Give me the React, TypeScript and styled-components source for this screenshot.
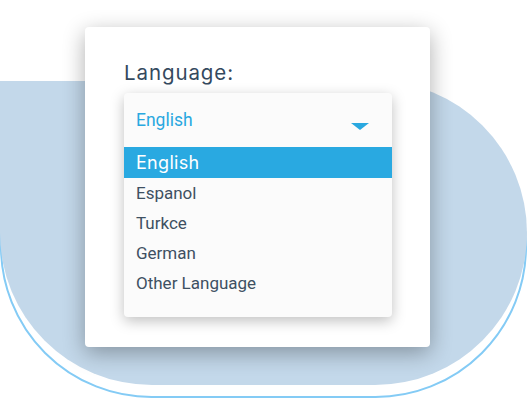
import React from 'react';
import styled, { createGlobalStyle } from 'styled-components';

const options = ['English', 'Espanol', 'Turkce', 'German', 'Other Language'];

const App: React.FC = () => {
  const selected = 'English';

  return (
    <>
      <GlobalStyle />
      <Page>
        <Outline />
        <Blob />
        <Card>
          <Label>Language:</Label>
          <Dropdown>
            <SelectBox>
              <Current>{selected}</Current>
              <Caret />
            </SelectBox>
            <OptionList>
              {options.map((o) => (
                <Option key={o} $active={o === selected}>
                  {o}
                </Option>
              ))}
            </OptionList>
          </Dropdown>
        </Card>
      </Page>
    </>
  );
};

// component style
const GlobalStyle = createGlobalStyle`
  body {
    margin: 0;
    background: #ffffff;
    font-family: Roboto, "Liberation Sans", sans-serif;
  }
`;

const Page = styled.div`
  position: relative;
  width: 527px;
  height: 399px;
  overflow: hidden;
  box-sizing: border-box;
  padding: 27px 0 0 85px;
  background: #ffffff;
`;

// decorative backdrop shapes behind the card
const Blob = styled.div`
  position: absolute;
  left: 0;
  top: 81px;
  width: 527px;
  height: 304px;
  border-radius: 0 152px 152px 152px;
  background: #c3d8ea;
`;

const Outline = styled.div`
  position: absolute;
  left: 0;
  top: 95px;
  width: 527px;
  height: 303px;
  box-sizing: border-box;
  border: 2px solid #84cbf5;
  border-radius: 0 152px 152px 152px;
`;

const Card = styled.div`
  position: relative;
  z-index: 1;
  width: 345px;
  height: 320px;
  box-sizing: border-box;
  padding: 34px 38px 0 39px;
  background: #ffffff;
  border-radius: 4px;
  box-shadow: 0 6px 22px rgba(0, 0, 0, 0.32);
`;

const Label = styled.div`
  font-family: Inter, "Open Sans", sans-serif;
  font-size: 20.5px;
  line-height: 24px;
  letter-spacing: 0.9px;
  color: #34495e;
  margin-bottom: 8px;
`;

const Dropdown = styled.div`
  width: 268px;
  background: #fbfbfb;
  border-radius: 4px;
  box-shadow: 0 4px 14px rgba(0, 0, 0, 0.25);
  padding-bottom: 19px;
`;

const SelectBox = styled.div`
  height: 54px;
  display: flex;
  align-items: center;
  justify-content: space-between;
  padding: 0 23px 0 12px;
`;

const Current = styled.span`
  font-size: 17.5px;
  color: #29a8e0;
`;

const Caret = styled.span`
  width: 0;
  height: 0;
  margin-top: 12px;
  border-left: 9.5px solid transparent;
  border-right: 9.5px solid transparent;
  border-top: 7px solid #29a8e0;
`;

const OptionList = styled.div`
  display: flex;
  flex-direction: column;
`;

const Option = styled.div<{ $active?: boolean }>`
  height: ${(p) => (p.$active ? '31px' : '30px')};
  display: flex;
  align-items: center;
  padding-left: 12px;
  font-family: ${(p) => (p.$active ? 'Inter, "Open Sans", sans-serif' : 'Roboto, "Liberation Sans", sans-serif')};
  font-size: ${(p) => (p.$active ? '18px' : '17px')};
  letter-spacing: ${(p) => (p.$active ? '0.3px' : '0')};
  color: ${(p) => (p.$active ? '#ffffff' : '#3e5062')};
  background: ${(p) => (p.$active ? '#29a9e1' : 'transparent')};
`;

export default App;
